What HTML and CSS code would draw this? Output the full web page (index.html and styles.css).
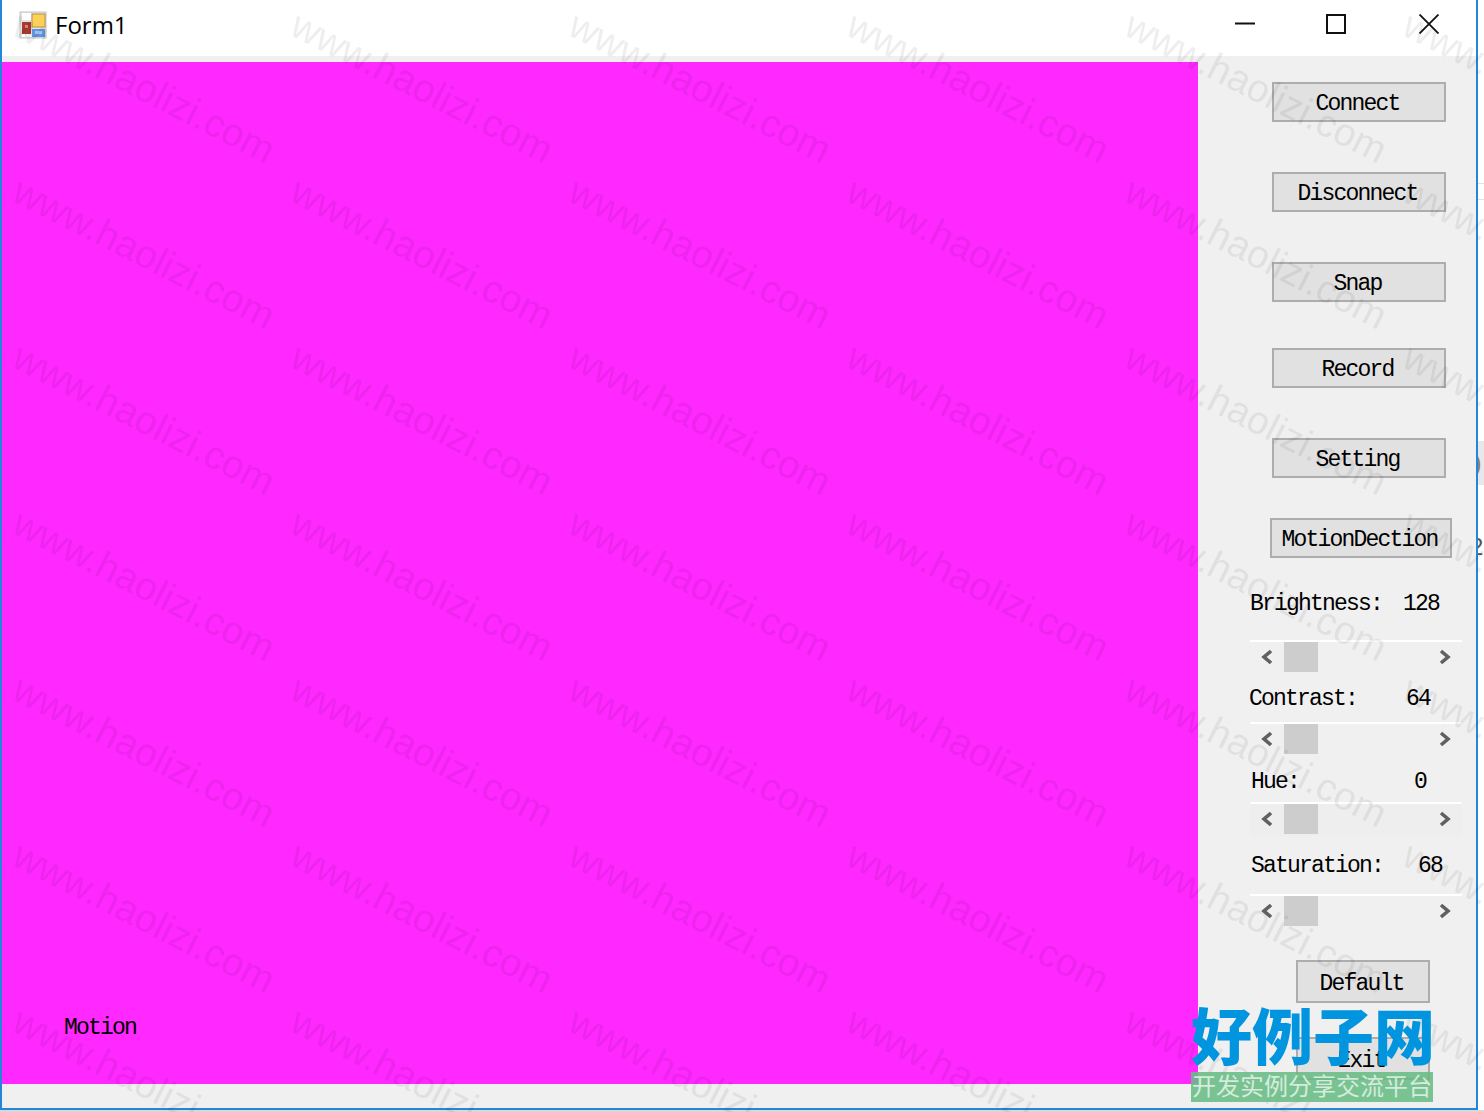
FILE: index.html
```html
<!DOCTYPE html>
<html lang="en">
<head>
<meta charset="utf-8">
<title>Form1</title>
<link rel="stylesheet" href="styles.css">
</head>
<body>
<div class="desktop">
  <div class="window">
    <header class="titlebar">
      <svg class="app-icon" width="28" height="28" viewBox="0 0 28 28">
        <rect x="1" y="1" width="26" height="26" fill="#e4e4e4" stroke="#c4c4c4"/>
        <rect x="3" y="2" width="9" height="7" fill="#fff"/>
        <rect x="3" y="11" width="9" height="12" fill="#a83a30"/>
        <rect x="6" y="14" width="3" height="3" fill="#e08a7a"/>
        <rect x="3" y="23" width="3" height="3" fill="#fff"/>
        <rect x="8" y="23" width="4" height="3" fill="#fff"/>
        <rect x="13" y="3" width="13" height="13" fill="#fdd05a" stroke="#b9923c"/>
        <rect x="13" y="18" width="13" height="8" fill="#5f95e0"/>
        <rect x="16" y="20" width="7" height="3" fill="#a9c8f2"/>
      </svg>
      <span class="title">Form1</span>
      <div class="controls">
        <svg class="ctl" width="20" height="20" viewBox="0 0 20 20"><path d="M0 9.5H20" stroke="#111" stroke-width="2" fill="none"/></svg>
        <svg class="ctl ctl-max" width="20" height="20" viewBox="0 0 20 20"><rect x="1" y="1" width="18" height="18" stroke="#111" stroke-width="2" fill="none"/></svg>
        <svg class="ctl" width="20" height="20" viewBox="0 0 20 20"><path d="M0.5 0.5L19.5 19.5M19.5 0.5L0.5 19.5" stroke="#111" stroke-width="1.8" fill="none"/></svg>
      </div>
    </header>
    <div class="client">
      <div class="canvas"><span class="motion">Motion</span></div>
      <aside class="side">
        <button class="btn b-connect">Connect</button>
        <button class="btn b-gap">Disconnect</button>
        <button class="btn b-gap">Snap</button>
        <button class="btn b-record">Record</button>
        <button class="btn b-gap">Setting</button>
        <button class="btn b-motion">MotionDection</button>

        <div class="row r-bright"><span class="lab">Brightness:</span><span class="val v-bright">128</span></div>
        <div class="scroll s-bright">
          <span class="arrow"><svg width="14" height="16" viewBox="0 0 14 16"><path d="M11 2L4 8L11 14" class="chev"/></svg></span>
          <span class="thumb"></span><span class="fill"></span>
          <span class="arrow"><svg width="14" height="16" viewBox="0 0 14 16"><path d="M3 2L10 8L3 14" class="chev"/></svg></span>
        </div>

        <div class="row r-contrast"><span class="lab">Contrast:</span><span class="val v-contrast">64</span></div>
        <div class="scroll s-contrast">
          <span class="arrow"><svg width="14" height="16" viewBox="0 0 14 16"><path d="M11 2L4 8L11 14" class="chev"/></svg></span>
          <span class="thumb"></span><span class="fill"></span>
          <span class="arrow"><svg width="14" height="16" viewBox="0 0 14 16"><path d="M3 2L10 8L3 14" class="chev"/></svg></span>
        </div>

        <div class="row r-hue"><span class="lab">Hue:</span><span class="val v-hue">0</span></div>
        <div class="scroll s-hue">
          <span class="arrow"><svg width="14" height="16" viewBox="0 0 14 16"><path d="M11 2L4 8L11 14" class="chev"/></svg></span>
          <span class="thumb"></span><span class="fill"></span>
          <span class="arrow"><svg width="14" height="16" viewBox="0 0 14 16"><path d="M3 2L10 8L3 14" class="chev"/></svg></span>
        </div>

        <div class="row r-sat"><span class="lab">Saturation:</span><span class="val v-sat">68</span></div>
        <div class="scroll s-sat">
          <span class="arrow"><svg width="14" height="16" viewBox="0 0 14 16"><path d="M11 2L4 8L11 14" class="chev"/></svg></span>
          <span class="thumb"></span><span class="fill"></span>
          <span class="arrow"><svg width="14" height="16" viewBox="0 0 14 16"><path d="M3 2L10 8L3 14" class="chev"/></svg></span>
        </div>

        <button class="btn b-low b-default">Default</button>
        <button class="btn b-low b-exit">Exit</button>
      </aside>
    </div>
  </div>
  <div class="behind">
    <span class="behind-line l1"></span>
    <span class="behind-line l2"></span>
    <span class="behind-box"><span class="peek">)</span></span>
    <span class="peek-two">2</span>
  </div>
</div>

<svg class="watermark" width="1484" height="1112">
  <defs>
    <pattern id="wm" patternUnits="userSpaceOnUse" x="0" y="12" width="278" height="166">
      <text class="wm-text" transform="translate(10 22) rotate(26.9)">www.haolizi.com</text>
    </pattern>
  </defs>
  <rect width="1484" height="1112" fill="url(#wm)"/>
</svg>

<div class="logo">
  <div class="logo-name">好例子网</div>
  <div class="logo-sub">开发实例分享交流平台</div>
</div>
</body>
</html>
```

FILE: styles.css
```css
* { box-sizing: border-box; }
html, body { margin: 0; padding: 0; }
body { width: 1484px; height: 1112px; overflow: hidden; background: #fff; position: relative; }

.desktop { display: flex; height: 1112px; background: linear-gradient(#fff 1110px, #d8d8d8 1110px); }
.window {
  width: 1478px; height: 1110px; flex: none;
  display: flex; flex-direction: column;
  border: 2px solid #2486d8; border-top: 0;
  background: #f0f0f0;
}
.behind { flex: 1; display: flex; flex-direction: column; overflow: hidden; }
.behind-line { display: block; height: 1px; background: #e2e2e2; }
.l1 { margin-top: 183px; }
.l2 { margin-top: 15px; }
.behind-box { display: block; height: 44px; margin-top: 241px; background: #e8e8e8; overflow: hidden; }
.peek { display: block; font: 26px/44px "Liberation Sans", sans-serif; color: #8a8070; margin-left: -5px; }
.peek-two { display: block; font: 24px/24px "Liberation Sans", sans-serif; color: #555; margin-top: 50px; margin-left: -8px; }

.titlebar { height: 56px; flex: none; background: #fff; display: flex; align-items: center; padding-left: 18px; }
.app-icon { margin-top: -6px; margin-left: -1px; }
.title { font: 24px/32px "Open Sans", "Noto Sans", sans-serif; color: #000; margin-left: 8px; margin-top: -6px; }
.controls { margin-left: auto; display: flex; margin-top: -8px; margin-right: 37px; gap: 72px; }
.ctl { display: block; }
.ctl-max { margin-left: -1px; margin-right: 1px; }

.client { flex: 1; display: flex; }
.canvas {
  width: 1196px; height: 1022px; margin-top: 6px;
  background: #ff28ff; display: flex; align-items: flex-end;
}
.motion, .btn, .lab, .val { font-family: "Liberation Mono", "Courier New", monospace; font-size: 23px; letter-spacing: -1.8px; color: #000; }
.motion { margin: 0 0 44px 62px; line-height: 24px; }

.side { flex: 1; display: flex; flex-direction: column; align-items: flex-start; }
.btn {
  width: 174px; height: 40px; margin-left: 74px; padding: 4px 3px 0 0;
  background: #e1e1e1; border: 2px solid #adadad; border-radius: 0;
  line-height: 32px; text-align: center;
}
.b-connect { margin-top: 26px; }
.b-gap { margin-top: 50px; }
.b-record { margin-top: 46px; }
.b-motion { margin-top: 40px; margin-left: 72px; width: 182px; }
.b-low { width: 134px; height: 43px; margin-left: 98px; margin-top: 34px; }

.row { height: 24px; display: flex; line-height: 28px; white-space: pre; }
.r-bright { margin-top: 32px; margin-left: 52px; }
.r-contrast { margin-top: 13px; margin-left: 51px; }
.r-hue { margin-top: 14px; margin-left: 53px; }
.r-sat { margin-top: 16px; margin-left: 53px; }
.v-bright { margin-left: 21px; }
.v-contrast { margin-left: 49px; }
.v-hue { margin-left: 115px; }
.v-sat { margin-left: 35px; }

.scroll { width: 212px; margin-left: 52px; display: flex; border-top: 2px solid #fff; height: 32px; }
.s-bright { margin-top: 26px; }
.s-contrast { margin-top: 13px; }
.s-hue { margin-top: 10px; height: 34px; background: #eeeeee; }
.s-sat { margin-top: 18px; }
.arrow { width: 34px; height: 30px; display: flex; align-items: center; justify-content: center; }
.chev { fill: none; stroke: #606060; stroke-width: 3.6; }
.thumb { width: 34px; height: 30px; background: #cdcdcd; }
.fill { flex: 1; }

.watermark { position: absolute; left: 0; top: 0; pointer-events: none; }
.wm-text { font: 38.9px "Liberation Sans", Arial, sans-serif; fill: rgba(0,0,0,.065); }

.logo { position: absolute; left: 1191px; top: 1001px; width: 242px; }
.logo-name {
  font: 900 61px/66px "Noto Sans CJK SC", sans-serif; color: #0095de;
  text-align: center; white-space: nowrap; height: 71px;
}
.logo-sub {
  height: 30px; background: rgba(104,188,132,.88); color: rgba(255,255,255,.7);
  font: 24px/26px "Noto Sans CJK SC", sans-serif; text-align: center; white-space: nowrap;
}
```
